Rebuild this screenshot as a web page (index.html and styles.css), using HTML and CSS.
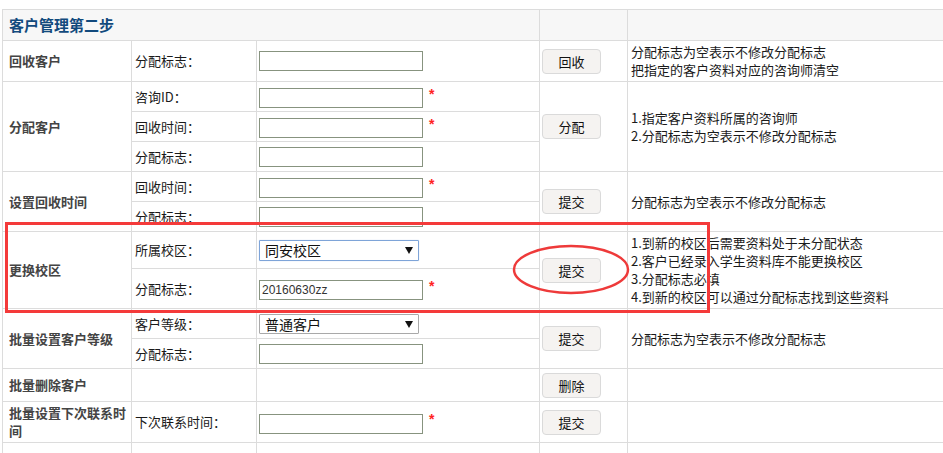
FILE: index.html
```html
<!DOCTYPE html>
<html lang="zh-CN">
<head>
<meta charset="utf-8">
<title>客户管理第二步</title>
<link rel="stylesheet" href="styles.css">
</head>
<body>
<div class="page">
  <table class="grid">
    <colgroup>
      <col class="c1"><col class="c2"><col class="c3"><col class="c4"><col class="c5">
    </colgroup>
    <tr class="head">
      <td colspan="3" class="title">客户管理第二步</td>
      <td></td>
      <td></td>
    </tr>
    <tr class="h41">
      <th>回收客户</th>
      <td class="lbl">分配标志：</td>
      <td class="fld"><input class="txt" type="text"></td>
      <td class="act"><button class="btn">回收</button></td>
      <td class="desc">分配标志为空表示不修改分配标志<br>把指定的客户资料对应的咨询师清空</td>
    </tr>
    <tr class="h30">
      <th rowspan="3">分配客户</th>
      <td class="lbl">咨询ID：</td>
      <td class="fld"><input class="txt" type="text"><span class="req">*</span></td>
      <td class="act" rowspan="3"><button class="btn">分配</button></td>
      <td class="desc" rowspan="3">1.指定客户资料所属的咨询师<br>2.分配标志为空表示不修改分配标志</td>
    </tr>
    <tr class="h30">
      <td class="lbl">回收时间：</td>
      <td class="fld"><input class="txt" type="text"><span class="req">*</span></td>
    </tr>
    <tr class="h30">
      <td class="lbl">分配标志：</td>
      <td class="fld"><input class="txt" type="text"></td>
    </tr>
    <tr class="h30">
      <th rowspan="2">设置回收时间</th>
      <td class="lbl">回收时间：</td>
      <td class="fld"><input class="txt" type="text"><span class="req">*</span></td>
      <td class="act" rowspan="2"><button class="btn">提交</button></td>
      <td class="desc" rowspan="2">分配标志为空表示不修改分配标志</td>
    </tr>
    <tr class="h30">
      <td class="lbl">分配标志：</td>
      <td class="fld"><input class="txt" type="text"></td>
    </tr>
    <tr class="h37">
      <th rowspan="2">更换校区</th>
      <td class="lbl">所属校区：</td>
      <td class="fld"><span class="sel focus"><select><option>同安校区</option></select></span></td>
      <td class="act" rowspan="2"><button class="btn">提交</button></td>
      <td class="desc" rowspan="2">1.到新的校区后需要资料处于未分配状态<br>2.客户已经录入学生资料库不能更换校区<br>3.分配标志必填<br>4.到新的校区可以通过分配标志找到这些资料</td>
    </tr>
    <tr class="h40">
      <td class="lbl">分配标志：</td>
      <td class="fld"><input class="txt" type="text" value="20160630zz"><span class="req">*</span></td>
    </tr>
    <tr class="h30">
      <th rowspan="2">批量设置客户等级</th>
      <td class="lbl">客户等级：</td>
      <td class="fld"><span class="sel"><select><option>普通客户</option></select></span></td>
      <td class="act" rowspan="2"><button class="btn">提交</button></td>
      <td class="desc" rowspan="2">分配标志为空表示不修改分配标志</td>
    </tr>
    <tr class="h30">
      <td class="lbl">分配标志：</td>
      <td class="fld"><input class="txt" type="text"></td>
    </tr>
    <tr class="h33">
      <th>批量删除客户</th>
      <td class="lbl"></td>
      <td class="fld"></td>
      <td class="act"><button class="btn">删除</button></td>
      <td class="desc"></td>
    </tr>
    <tr class="h41">
      <th>批量设置下次联系时间</th>
      <td class="lbl">下次联系时间：</td>
      <td class="fld"><input class="txt" type="text"><span class="req">*</span></td>
      <td class="act"><button class="btn">提交</button></td>
      <td class="desc"></td>
    </tr>
    <tr class="h30">
      <th></th><td></td><td></td><td></td><td></td>
    </tr>
  </table>
  <svg class="marks" width="943" height="453" viewBox="0 0 943 453">
    <rect x="6.5" y="223.5" width="702" height="88" fill="none" stroke="#f43a3a" stroke-width="3"/>
    <ellipse cx="571" cy="269.5" rx="57" ry="23.5" fill="none" stroke="#ee3a3a" stroke-width="2.5"/>
  </svg>
</div>
</body>
</html>
```
FILE: styles.css
```css
html, body {
  margin: 0;
  padding: 0;
  background: #fff;
  overflow: hidden;
}
.page {
  position: relative;
  width: 943px;
  height: 453px;
  overflow: hidden;
  padding: 9px 0 0 2px;
  box-sizing: border-box;
  font-family: "Noto Sans CJK SC", "Liberation Sans", sans-serif;
  font-size: 13px;
  color: #222;
}
.grid {
  border-collapse: collapse;
  table-layout: fixed;
  width: 960px;
}
.c1 { width: 129px; }
.c2 { width: 125px; }
.c3 { width: 283px; }
.c4 { width: 88px; }
.c5 { width: 335px; }
.grid td, .grid th {
  border: 1px solid #dcdcdc;
  padding: 0;
  vertical-align: middle;
  text-align: left;
  line-height: 18px;
}
.head { height: 31px; background: #f7f7f7; }
.h30 { height: 30px; }
.h33 { height: 33px; }
.h37 { height: 37px; }
.h40 { height: 40px; }
.h41 { height: 41px; }
.title {
  padding-left: 6px !important;
  font-size: 15px;
  font-weight: bold;
  color: #124a7d;
}
.grid th {
  padding: 0 4px 0 6px;
  font-weight: bold;
  color: #444;
}
.lbl { padding-left: 3px !important; color: #1a1a1a; }
.fld { padding-left: 2px !important; }
.act { padding-left: 2px !important; }
.desc { padding-left: 3px !important; color: #1a1a1a; }
.txt {
  box-sizing: border-box;
  width: 164px;
  height: 20px;
  margin: 0;
  padding: 0 2px;
  border: 1px solid #87937f;
  background: #fff;
  font-family: "Liberation Sans", sans-serif;
  font-size: 12px;
  color: #333;
  vertical-align: middle;
}
.req {
  color: #f22;
  margin-left: 6px;
  font-family: "Liberation Sans", sans-serif;
  font-size: 14px;
  font-weight: bold;
  vertical-align: 3px;
}
.btn {
  box-sizing: border-box;
  width: 59px;
  height: 25px;
  margin: 0;
  padding: 0;
  border: 1px solid #dadada;
  border-radius: 4px;
  background: #f5f3f1;
  font-family: "Noto Sans CJK SC", sans-serif;
  font-size: 13px;
  color: #111;
  vertical-align: middle;
}
.sel {
  position: relative;
  display: inline-block;
  vertical-align: middle;
}
.sel select {
  -webkit-appearance: none;
  appearance: none;
  box-sizing: border-box;
  width: 160px;
  height: 20px;
  margin: 0;
  padding: 0 0 0 5px;
  border: 1px solid #a9a9a9;
  border-radius: 1px;
  background: #fff;
  font-family: "Noto Sans CJK SC", sans-serif;
  font-size: 14px;
  line-height: 18px;
  color: #111;
  display: block;
}
.sel.focus select {
  height: 21px;
  border-color: #7ea4d8;
  box-shadow: 0 0 1px #a9c3e6;
}
.sel::after {
  content: "";
  position: absolute;
  right: 6px;
  top: 7px;
  border-left: 4px solid transparent;
  border-right: 4px solid transparent;
  border-top: 7px solid #111;
}
.marks {
  position: absolute;
  left: 0;
  top: 0;
  pointer-events: none;
}
```
